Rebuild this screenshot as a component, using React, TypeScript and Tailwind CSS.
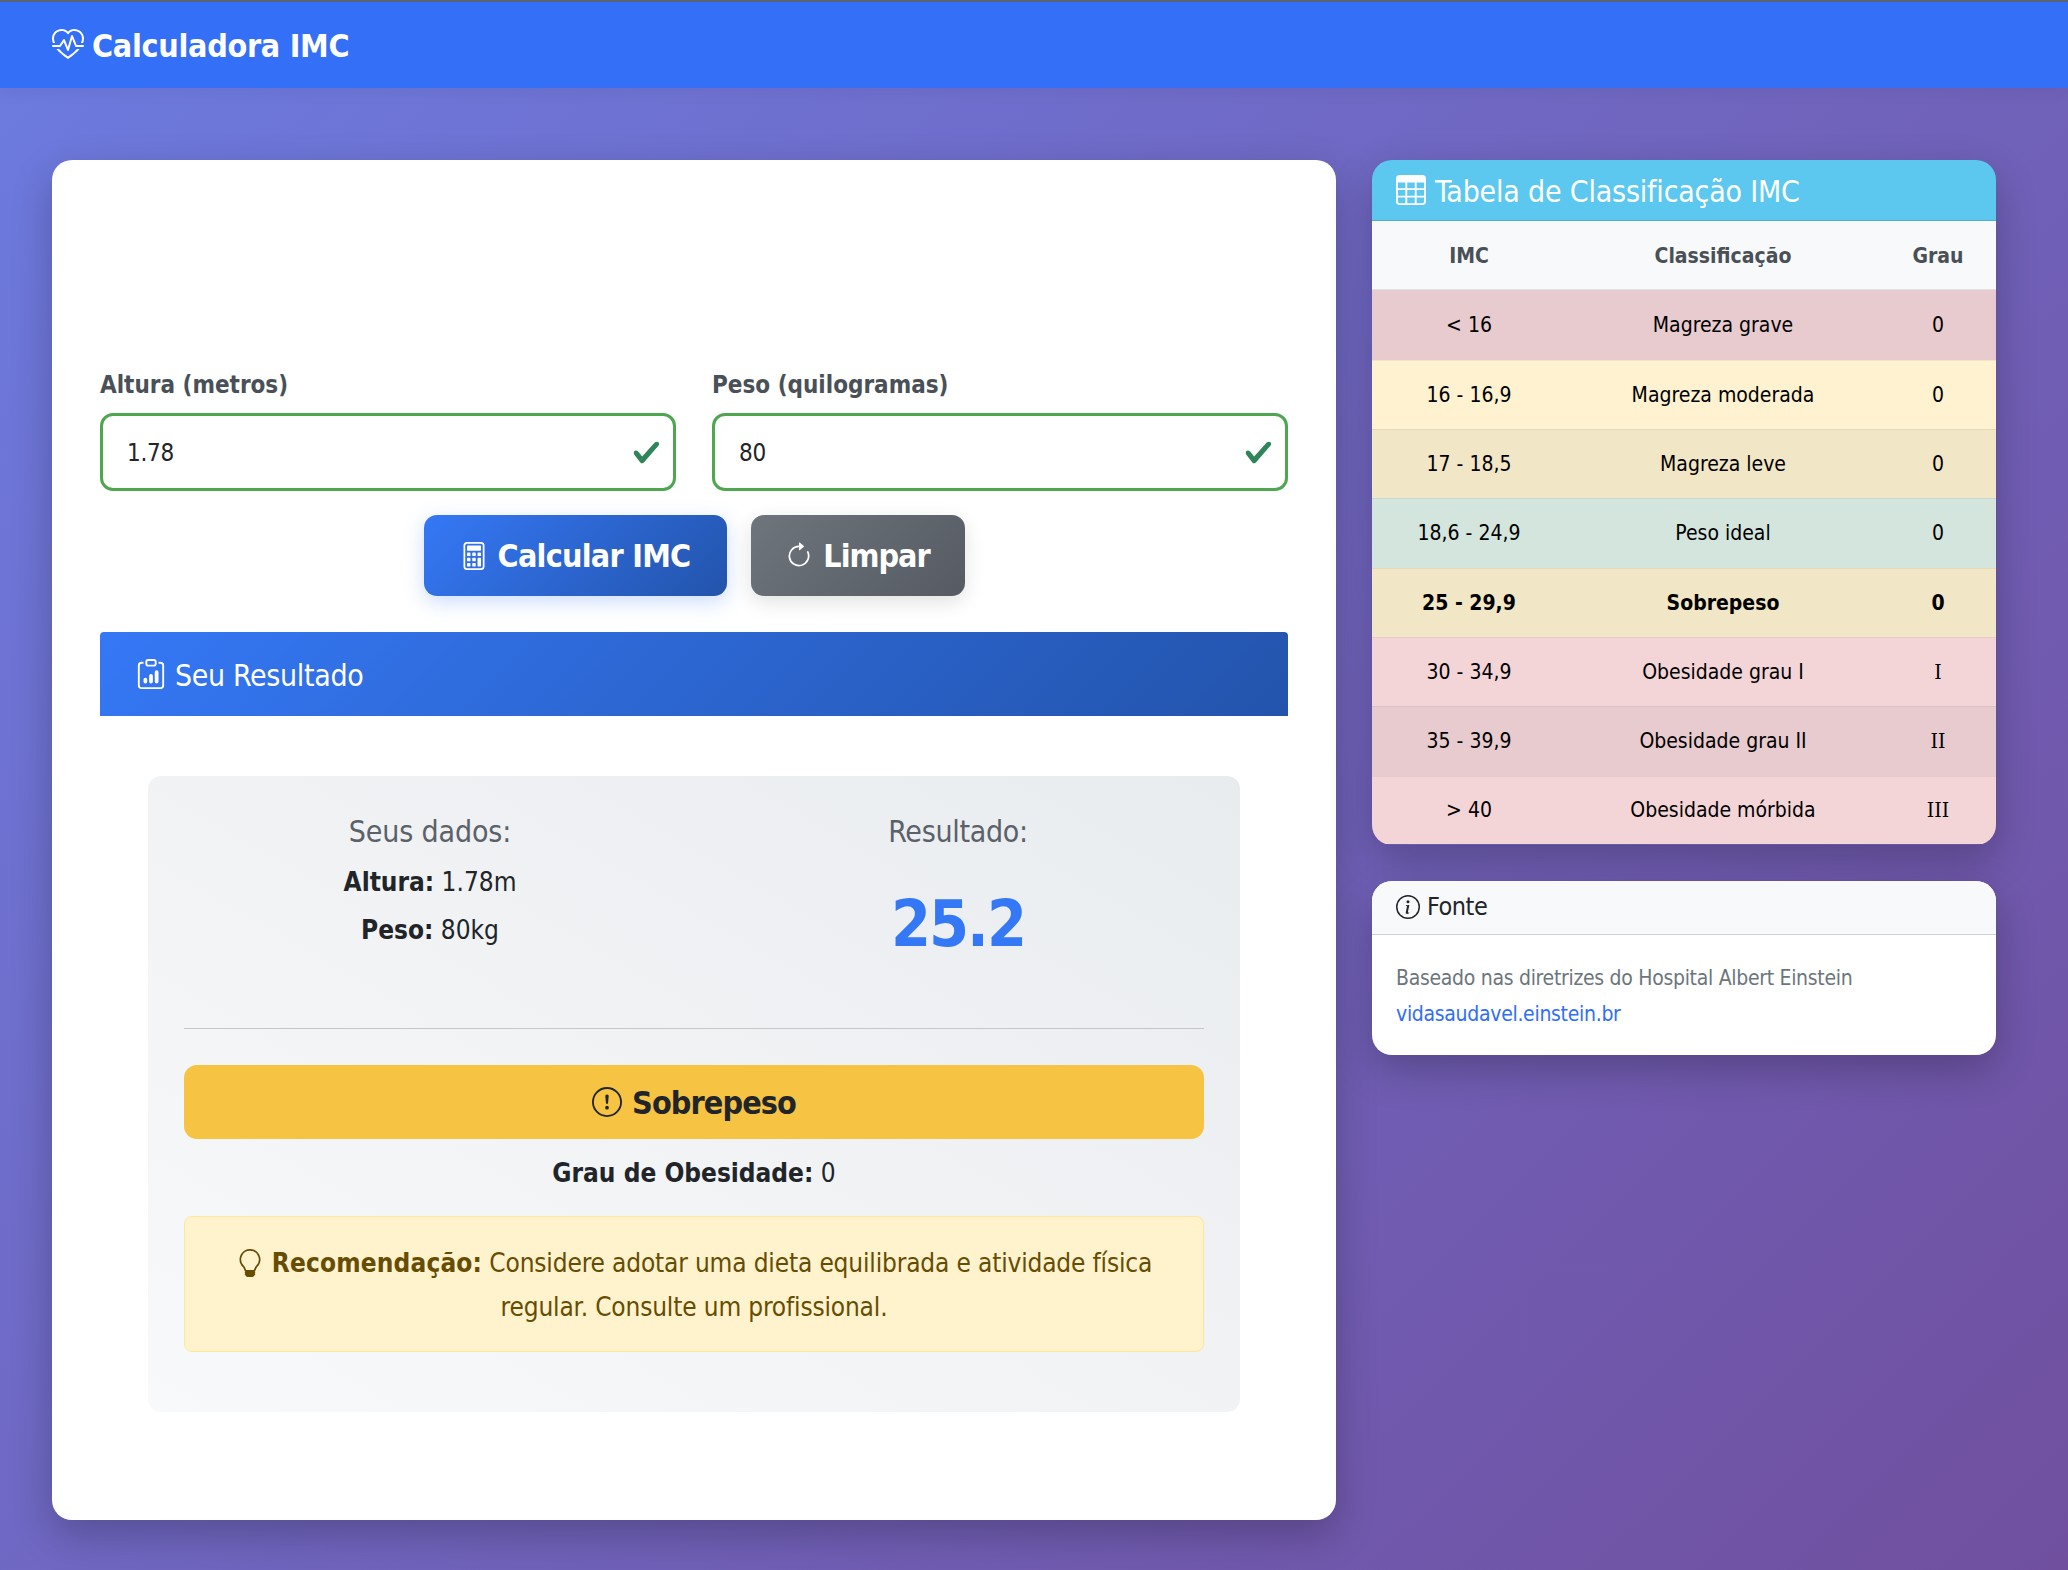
import {
  BsArrowClockwise,
  BsCalculator,
  BsClipboardData,
  BsExclamationCircle,
  BsHeartPulse,
  BsInfoCircle,
  BsLightbulb,
  BsTable,
} from 'react-icons/bs'

const rows = [
  { imc: '< 16', label: 'Magreza grave', grau: '0', bg: 'bg-[#e8cbcf]', h: 'h-[71px]' },
  { imc: '16 - 16,9', label: 'Magreza moderada', grau: '0', bg: 'bg-[#fef2d0]', h: 'h-[69px]' },
  { imc: '17 - 18,5', label: 'Magreza leve', grau: '0', bg: 'bg-[#f1e6c5]', h: 'h-[69px]' },
  { imc: '18,6 - 24,9', label: 'Peso ideal', grau: '0', bg: 'bg-[#d4e5dd]', h: 'h-[70px]' },
  { imc: '25 - 29,9', label: 'Sobrepeso', grau: '0', bg: 'bg-[#f1e6c5]', h: 'h-[69px]', bold: true },
  { imc: '30 - 34,9', label: 'Obesidade grau I', grau: 'I', bg: 'bg-[#f3d5d8]', h: 'h-[69px]' },
  { imc: '35 - 39,9', label: 'Obesidade grau II', grau: 'II', bg: 'bg-[#e8cbcf]', h: 'h-[70px]' },
  { imc: '> 40', label: 'Obesidade mórbida', grau: 'III', bg: 'bg-[#f3d5d8]', h: 'h-[68px]' },
]

function Field({ label, value, className }: { label: string; value: string; className?: string }) {
  return (
    <div className={className}>
      <label className="block text-[24px] leading-[36px] font-bold text-[#495057] pt-[2px] mb-[10px]">{label}</label>
      <div className="relative h-[78px] rounded-[13px] border-[3px] border-[#4ea651] bg-white flex items-center pl-[24px] pt-[2px] text-[24px] tracking-[-0.3px] text-[#212529]">
        {value}
        <svg viewBox="0 0 8 8" className="absolute right-[12px] top-[22px] w-[29px] h-[29px]">
          <path
            fill="#2f8558"
            d="M2.3 6.73.6 4.53c-.4-1.04.46-1.4 1.1-.8l1.1 1.4 3.4-3.8c.6-.63 1.6-.27 1.2.7l-4 4.6c-.43.5-.8.4-1.1.1z"
          />
        </svg>
      </div>
    </div>
  )
}

export default function App() {
  return (
    <div className="min-h-[1570px] bg-linear-135 from-[#6c7be0] to-[#704f9f] font-['DejaVu_Sans_Condensed','DejaVu_Sans',sans-serif] text-[#212529]">
      <nav className="h-[88px] bg-[#346ff7] border-t-2 border-[#5b6270] flex items-center px-[52px] shadow-[0_4px_16px_rgba(0,0,0,0.05)]">
        <div className="flex items-center gap-[8px] pt-[2px] text-white text-[32px] font-bold tracking-[-0.3px]">
          <BsHeartPulse className="w-[32px] h-[32px] -mt-[2px]" />
          Calculadora IMC
        </div>
      </nav>

      <main className="flex items-start gap-[36px] pt-[72px] pl-[52px] pr-[72px]">
        <section className="w-[1284px] h-[1360px] shrink-0 rounded-[20px] bg-white pt-[205px] px-[48px] shadow-[0_15px_40px_rgba(0,0,0,0.24)]">
          <div className="flex gap-[36px]">
            <Field label="Altura (metros)" value="1.78" className="w-[576px]" />
            <Field label="Peso (quilogramas)" value="80" className="w-[576px]" />
          </div>

          <div className="flex justify-center gap-[24px] mt-[24px]">
            <button className="w-[303px] h-[81px] rounded-[13px] bg-linear-135 from-[#3578f6] to-[#2354ac] text-white text-[32px] font-bold tracking-[-0.75px] flex items-center justify-center gap-[10px] shadow-[0_6px_20px_rgba(53,120,246,0.25)]">
              <BsCalculator className="w-[28px] h-[30px]" />
              Calcular IMC
            </button>
            <button className="w-[214px] h-[81px] rounded-[13px] bg-linear-135 from-[#6e757d] to-[#565b63] text-white text-[32px] font-bold tracking-[-1px] flex items-center justify-center gap-[10px] shadow-[0_6px_20px_rgba(0,0,0,0.12)]">
              <BsArrowClockwise className="w-[28px] h-[28px]" />
              Limpar
            </button>
          </div>

          <div className="mt-[36px] h-[84px] rounded-t-[4px] bg-linear-135 from-[#3578f6] to-[#2354ac] flex items-center gap-[9px] px-[36px] text-white text-[30px] tracking-[-0.35px]">
            <BsClipboardData className="w-[30px] h-[30px]" />
            <span className="pt-[2px]">Seu Resultado</span>
          </div>

          <div className="mt-[60px] mx-[48px] rounded-[13px] bg-linear-to-tr from-[#f8f9fa] to-[#e9ecef] px-[36px] pt-[36px] pb-[60px]">
            <div className="grid grid-cols-2 -mx-[18px] h-[216px] text-center">
              <div>
                <h5 className="text-[30px] leading-[40px] tracking-[-0.15px] text-[#5b6168] mb-[6px]">Seus dados:</h5>
                <p className="text-[26px] leading-[48px]"><strong>Altura:</strong> 1.78m</p>
                <p className="text-[26px] leading-[48px]"><strong>Peso:</strong> 80kg</p>
              </div>
              <div>
                <h5 className="text-[30px] leading-[40px] tracking-[-0.3px] text-[#5b6168]">Resultado:</h5>
                <div className="text-[64px] leading-[76px] font-bold tracking-[-2px] text-[#3578f6] mt-[34px]">25.2</div>
              </div>
            </div>
            <hr className="border-[#c4c6c9]" />
            <div className="mt-[36px] h-[74px] rounded-[13px] bg-[#f6c343] flex items-center justify-center gap-[10px] text-[32px] font-bold tracking-[-0.9px]">
              <BsExclamationCircle className="w-[30px] h-[30px]" />
              <span className="pt-[2px]">Sobrepeso</span>
            </div>
            <p className="mt-[16px] text-center text-[26px] leading-[36px]"><strong>Grau de Obesidade:</strong> 0</p>
            <div className="mt-[25px] h-[136px] rounded-[8px] border border-[#ffe69c] bg-[#fff3cd] text-[#664d03] text-[26px] tracking-[-0.16px] leading-[44px] text-center px-[24px] pt-[24px]">
              <BsLightbulb className="inline w-[28px] h-[28px] mr-[8px] align-[-5px]" />
              <strong className="tracking-[0.15px]">Recomendação:</strong> Considere adotar uma dieta equilibrada e atividade física regular. Consulte um profissional.
            </div>
          </div>
        </section>

        <aside className="w-[624px] shrink-0 flex flex-col gap-[36px]">
          <div className="rounded-[20px] overflow-hidden shadow-[0_15px_40px_rgba(0,0,0,0.24)]">
            <div className="h-[61px] bg-[#5cc8ef] border-b border-[#4fafd2] flex items-center gap-[9px] px-[24px] text-white text-[30px] tracking-[-0.2px]">
              <BsTable className="w-[30px] h-[30px]" />
              <span className="pt-[2px]">Tabela de Classificação IMC</span>
            </div>
            <table className="w-full table-fixed text-center text-[21px]">
              <colgroup>
                <col className="w-[194px]" />
                <col className="w-[314px]" />
                <col className="w-[116px]" />
              </colgroup>
              <thead>
                <tr className="h-[68px] bg-[#f8f9fa] text-[#495057] border-b border-[#dee2e6]">
                  <th className="pt-[3px]">IMC</th>
                  <th className="pt-[3px]">Classificação</th>
                  <th className="pt-[3px]">Grau</th>
                </tr>
              </thead>
              <tbody className="text-black">
                {rows.map((r) => (
                  <tr key={r.imc} className={`${r.bg} ${r.h} border-b border-black/5 ${r.bold ? 'font-bold' : ''}`}>
                    <td className="pt-[2px]">{r.imc}</td>
                    <td className="pt-[2px]">{r.label}</td>
                    <td className={r.grau === '0' ? 'pt-[2px]' : "pt-[2px] font-['DejaVu_Serif_Condensed','DejaVu_Serif',serif]"}>{r.grau}</td>
                  </tr>
                ))}
              </tbody>
            </table>
          </div>

          <div className="rounded-[20px] overflow-hidden bg-white shadow-[0_15px_40px_rgba(0,0,0,0.24)]">
            <div className="h-[54px] bg-[#f8f9fa] border-b border-[#cfd1d4] flex items-center gap-[7px] px-[24px] text-[25px] tracking-[-0.5px]">
              <BsInfoCircle className="w-[24px] h-[24px]" />
              Fonte
            </div>
            <div className="px-[24px] pt-[25px] h-[120px] text-[21px] tracking-[-0.3px] leading-[36px]">
              <p className="text-[#6c757d]">Baseado nas diretrizes do Hospital Albert Einstein</p>
              <a className="text-[#2f6ef6]">vidasaudavel.einstein.br</a>
            </div>
          </div>
        </aside>
      </main>
    </div>
  )
}
